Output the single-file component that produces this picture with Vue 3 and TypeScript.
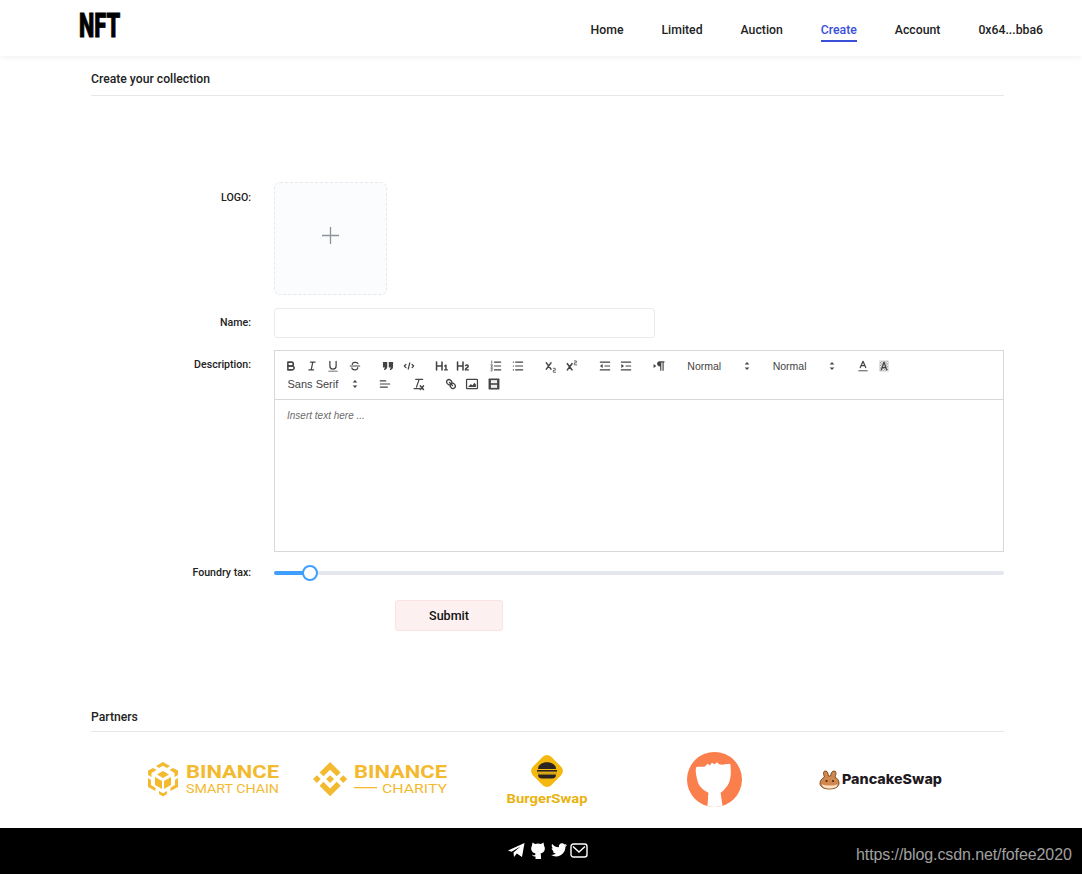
<template>
  <div class="page">
    <header class="top">
      <div class="logo">NFT</div>
      <nav class="nav">
        <a v-for="item in navItems" :key="item" class="nav-item" :class="{ active: item === 'Create' }">{{ item }}</a>
      </nav>
    </header>

    <main class="main">
      <h2 class="section-title">Create your collection</h2>

      <form class="form" @submit.prevent>
        <div class="row">
          <label class="label logo-label">LOGO:</label>
          <div class="upload">
            <svg width="19" height="19" viewBox="0 0 19 19"><path d="M9.5 1v17M1 9.5h17" stroke="#8c939d" stroke-width="1.3" /></svg>
          </div>
        </div>

        <div class="row">
          <label class="label name-label">Name:</label>
          <input class="input" type="text" />
        </div>

        <div class="row">
          <label class="label desc-label">Description:</label>
          <div class="editor">
            <div class="toolbar">
              <div class="tb-row">
                <span class="tb-group">
                  <span class="tb"><svg viewBox="0 0 18 18"><path class="st2" d="M5,4H9.5A2.5,2.5,0,0,1,12,6.5v0A2.5,2.5,0,0,1,9.5,9H5V4Z" /><path class="st2" d="M5,9h5.5A2.5,2.5,0,0,1,13,11.5v0A2.5,2.5,0,0,1,10.5,14H5V9Z" /></svg></span>
                  <span class="tb"><svg viewBox="0 0 18 18"><path class="st" d="M7 4h6M5 14h6M8 14l2-10" /></svg></span>
                  <span class="tb"><svg viewBox="0 0 18 18"><path class="st" d="M5,3V9a4,4,0,0,0,4,4h0a4,4,0,0,0,4-4V3" /><rect class="fl" x="3" y="15" width="12" height="1.2" rx=".5" /></svg></span>
                  <span class="tb"><svg viewBox="0 0 18 18"><path class="st" d="M3 9h12M5.6 7C5 4.200 12 3 12.800 6M12.500 11C13 14.500 5.500 15 5 11.500" /></svg></span>
                </span>
                <span class="tb-group">
                  <span class="tb"><svg viewBox="0 0 18 18"><path class="fl" d="M2.500 4h5.500v6c0 2.500-1.500 4-3.800 4.300l-.5-1.500c1-.3 1.500-1 1.500-1.800H2.500zM10 4h5.500v6c0 2.500-1.500 4-3.800 4.300l-.5-1.500c1-.3 1.500-1 1.500-1.800H10z" /></svg></span>
                  <span class="tb"><svg viewBox="0 0 18 18"><path class="st" d="M5 7 3 9l2 2M13 7l2 2-2 2M10 5 8 13" /></svg></span>
                </span>
                <span class="tb-group">
                  <span class="tb"><svg viewBox="0 0 18 18"><path class="fl" d="M10,4V14a1,1,0,0,1-2,0V10H3v4a1,1,0,0,1-2,0V4A1,1,0,0,1,3,4V8H8V4a1,1,0,0,1,2,0Zm6.07,9.21H14.99V7.6a.54.54,0,0,0-.6-.61h-.63a1,1,0,0,0-.75.3L11.650,8.570a.54.54,0,0,0-.02.86l.29.31a.54.54,0,0,0,.85.03l.1-.09a1.200,1.200,0,0,0,.24-.35h.02s-.01.31-.01.61V13.21H12.040a.54.54,0,0,0-.6.61v.44a.54.54,0,0,0,.6.6h4.030a.54.54,0,0,0,.6-.6v-.44A.54.54,0,0,0,16.070,13.210Z" /></svg></span>
                  <span class="tb"><svg viewBox="0 0 18 18"><path class="fl" d="M16.740,13.810v.44a.54.54,0,0,1-.6.61H11.860a.58.58,0,0,1-.65-.61V14.010c0-2.910,3.400-3.420,3.400-4.550a.78.78,0,0,0-.85-.78,1.180,1.180,0,0,0-.84.380c-.27.26-.56.370-.86.130l-.43-.34c-.31-.24-.39-.52-.15-.81a2.970,2.970,0,0,1,2.450-1.180,2.450,2.450,0,0,1,2.680,2.410c0,2.450-3.180,2.930-3.280,3.940h2.790A.54.54,0,0,1,16.74,13.81ZM9,3A1,1,0,0,0,8,4V8H3V4A1,1,0,0,0,1,4V14a1,1,0,0,0,2,0V10H8v4a1,1,0,0,0,2,0V4A1,1,0,0,0,9,3Z" /></svg></span>
                </span>
                <span class="tb-group">
                  <span class="tb"><svg viewBox="0 0 18 18"><path class="st" d="M7 4h8M7 9h8M7 14h8" /><path class="thin" d="M3.500 2.500v3M2.500 7.500h2l-2 3h2M2.500 12.500h2l-1 1.500c1 0 1 2-1 1.500" /></svg></span>
                  <span class="tb"><svg viewBox="0 0 18 18"><path class="st" d="M6 4h9M6 9h9M6 14h9M3 4h.1M3 9h.1M3 14h.1" /></svg></span>
                </span>
                <span class="tb-group">
                  <span class="tb"><svg viewBox="0 0 18 18"><path class="st2" d="M3 5l6 8M9 5l-6 8" /><path class="thin" d="M12 12h2.500v2.500H12V17h3" /></svg></span>
                  <span class="tb"><svg viewBox="0 0 18 18"><path class="st2" d="M3 6l6 8M9 6l-6 8" /><path class="thin" d="M12 2.500h2.500V5H12v2.500h3" /></svg></span>
                </span>
                <span class="tb-group">
                  <span class="tb"><svg viewBox="0 0 18 18"><path class="st" d="M3 4h12M3 14h12M9 9h6" /><path class="fl" d="M6 6.500v5L2.500 9z" /></svg></span>
                  <span class="tb"><svg viewBox="0 0 18 18"><path class="st" d="M3 4h12M3 14h12M9 9h6" /><path class="fl" d="M3 6.500v5L6.500 9z" /></svg></span>
                </span>
                <span class="tb-group">
                  <span class="tb"><svg viewBox="0 0 18 18"><path class="fl" d="M2 6.500v5L5.500 9z" /><path class="fl" d="M10 3h6v1.500h-1V15h-1.500V4.500H12V15h-1.500V9.500C8 9.500 6.500 8.200 6.500 6.200S8 3 10 3z" /></svg></span>
                </span>
                <span class="tb-group picker"><span>Normal</span><svg class="arrows" viewBox="0 0 18 18"><path class="fl" d="M6 7l3-3 3 3zM6 11l3 3 3-3z" /></svg></span>
                <span class="tb-group picker"><span>Normal</span><svg class="arrows" viewBox="0 0 18 18"><path class="fl" d="M6 7l3-3 3 3zM6 11l3 3 3-3z" /></svg></span>
                <span class="tb-group">
                  <span class="tb"><svg viewBox="0 0 18 18"><path class="st" d="M5.500 11 9 3l3.500 8M6.800 8.500h4.400" /><rect x="3" y="14.500" width="12" height="1.300" fill="#555" /></svg></span>
                  <span class="tb"><svg viewBox="0 0 18 18"><defs><pattern id="bgDots" width="2" height="2" patternUnits="userSpaceOnUse"><rect width="1" height="1" fill="#999" /><rect x="1" y="1" width="1" height="1" fill="#999" /></pattern></defs><rect x="3" y="2" width="12" height="14" fill="url(#bgDots)" /><path class="st" d="M5.500 14 9 4l3.500 10M6.800 11h4.400" /></svg></span>
                </span>
              </div>
              <div class="tb-row">
                <span class="tb-group picker font"><span>Sans Serif</span><svg class="arrows" viewBox="0 0 18 18"><path class="fl" d="M6 7l3-3 3 3zM6 11l3 3 3-3z" /></svg></span>
                <span class="tb-group">
                  <span class="tb"><svg viewBox="0 0 18 18"><path class="st" d="M3 5h7M3 9h12M3 13h9" /></svg></span>
                </span>
                <span class="tb-group">
                  <span class="tb"><svg viewBox="0 0 18 18"><path class="st" d="M6 3h9M10.500 3 7 13M4 15h7" /><path class="st2" d="M12 11.500l4 4.500M16 11.500l-4 4.500" /></svg></span>
                </span>
                <span class="tb-group">
                  <span class="tb"><svg viewBox="0 0 18 18"><path class="st" d="M7 7l4 4" /><path class="st" d="M8.900,4.577a3.476,3.476,0,0,1,.36,4.679A3.476,3.476,0,0,1,4.577,8.900C3.185,7.500,2.035,6.400,4.217,4.217S7.500,3.185,8.900,4.577Z" /><path class="st" d="M13.423,9.100a3.476,3.476,0,0,0-4.679-.36,3.476,3.476,0,0,0,.36,4.679c1.392,1.392,2.500,2.542,4.679.36S14.815,10.500,13.423,9.100Z" /></svg></span>
                  <span class="tb"><svg viewBox="0 0 18 18"><rect class="st" x="2" y="3" width="14" height="12" rx="1" /><path class="fl" d="M4 13l3.500-4 2 2 2.500-3.500 2 2V13z" /></svg></span>
                  <span class="tb"><svg viewBox="0 0 18 18"><rect class="fl" x="2" y="2" width="14" height="14" rx="1" /><rect x="5" y="4" width="8" height="4" fill="#eee" /><rect x="5" y="10" width="8" height="4" fill="#eee" /></svg></span>
                </span>
              </div>
            </div>
            <div class="editor-body">Insert text here ...</div>
          </div>
        </div>

        <div class="row slider-row">
          <label class="label">Foundry tax:</label>
          <div class="slider">
            <div class="slider-fill" :style="{ width: taxPercent + '%' }"></div>
            <div class="slider-handle" :style="{ left: taxPercent + '%' }"></div>
          </div>
        </div>

        <button class="submit" type="submit">Submit</button>
      </form>

      <h2 class="section-title partners-title">Partners</h2>

      <div class="partners">
        <svg width="134" height="36" viewBox="0 0 134 36">
          <g fill="#f3ba2f">
            <path d="M17 1l7 4-3 2-4-2.300L13 7l-3-2zM17 10l6 3.500-6 3.500-6-3.500zM9 16l7 4v8l-7-4zM25 16l-7 4v8l7-4z" />
            <path d="M7 7l3.500 2-5 3v4L2 14V9.500zM27 7l-3.500 2 5 3v4l3.500-2V9.500zM2 17l3 2v5l4.500 2.700V30L2 26zM32 17l-3 2v5l-4.500 2.700V30L32 26zM13 30l4 2.300 4-2.300v3l-4 2.500L13 33z" />
            <text class="bn-big" x="40" y="17" textLength="93" lengthAdjust="spacingAndGlyphs">BINANCE</text>
            <text class="bn-small" x="40" y="32" textLength="93" lengthAdjust="spacingAndGlyphs">SMART CHAIN</text>
          </g>
        </svg>
        <svg width="135" height="36" viewBox="0 0 135 36">
          <g fill="#f3ba2f">
            <path transform="translate(0 1) scale(.27)" d="M38.730 53.200l24.590-24.580 24.600 24.600 14.300-14.310L63.320 0 24.420 38.900zM0 63.310l14.300-14.310 14.310 14.310-14.310 14.300zM38.730 73.410l24.590 24.590 24.600-24.600 14.310 14.290L63.320 126.610 24.420 87.720zM98 63.310l14.300-14.310 14.310 14.310-14.310 14.300zM77.830 63.300L63.320 48.780 52.590 59.510l-1.240 1.230-2.540 2.540 14.510 14.500 14.510-14.470z" />
            <text class="bn-big" x="41" y="17" textLength="93" lengthAdjust="spacingAndGlyphs">BINANCE</text>
            <rect x="41" y="26" width="23" height="1.300" />
            <text class="bn-small" x="69" y="32" textLength="65" lengthAdjust="spacingAndGlyphs">CHARITY</text>
          </g>
        </svg>
        <svg class="burger-logo" width="82" height="54" viewBox="0 0 82 54">
          <rect x="28" y="5" width="26" height="26" rx="6" transform="rotate(45 41 18)" fill="#f5b80f" />
          <path d="M32 16c0-9 18-9 18 0z" fill="#2b2420" />
          <rect x="31" y="17" width="20" height="1.600" fill="#2b2420" />
          <rect x="31" y="19.500" width="20" height="1.300" fill="#c8a020" />
          <path d="M32 21.500h18c0 3-2 4-4 4H36c-2 0-4-1-4-4z" fill="#2b2420" />
          <text class="burger" x="41" y="50" text-anchor="middle" textLength="81" lengthAdjust="spacingAndGlyphs">BurgerSwap</text>
        </svg>
        <svg class="cat" width="55" height="55" viewBox="0 0 54 54">
          <defs>
            <clipPath id="catClip"><circle cx="27" cy="27" r="27" /></clipPath>
          </defs>
          <circle cx="27" cy="27" r="27" fill="#fb7e4d" />
          <path clip-path="url(#catClip)" fill="#fff" d="M9 15c3-1.500 6 .5 9-1l2-2.500 2.500 1.500 2-2.500 2.500 1.500 2.500-2 2 2 3 .5 3-.5 5-.5c.5 4 1 9 0 14-1 7-6 12-9.500 14.500L35 54H20l1-14c-6-3-10-7-11-13-1-4-2-9-1-12z" />
        </svg>
        <svg class="pancake-logo" width="124" height="24" viewBox="0 0 124 24">
          <path d="M5.500 11C4 7.500 4 5 6.500 5S9 8 9.500 10h2C12 8 12.500 5 15 5s2.500 2.500 1 6c2.500 1.500 4 3.500 4 6 0 4-4 6-9.500 6S1 21 1 17c0-2.500 2-4.500 4.500-6z" fill="#d1884f" stroke="#633001" stroke-width=".8" />
          <path d="M3 18c2 2 13 2 15.500 0 0 3-3 4.500-7.800 4.500S3 21 3 18z" fill="#fee3c4" />
          <circle cx="7.500" cy="15" r="1.100" fill="#452a15" />
          <circle cx="14" cy="15" r="1.100" fill="#452a15" />
          <text class="pancake" x="23" y="18" textLength="100" lengthAdjust="spacingAndGlyphs">PancakeSwap</text>
        </svg>
      </div>
    </main>

    <footer class="footer">
      <svg width="17" height="16" viewBox="0 0 17 16"><path fill="#fff" d="M0 8.500 16.500 1 14 15 8.800 11.500 6 15 5.500 10.500 12.500 4.500 3.500 9.800z" /></svg>
      <svg width="16" height="17" viewBox="0 0 16 17"><path fill="#fff" d="M2.500 0.500 5 2a8 8 0 0 1 6 0l2.500-1.500.6 3.500c1.500 2 1 6.500-3.600 7.500.5 1 .5 2.500.5 5.500H5.500v-2.500c-2.500.5-3-1.500-4-2 1.500 0 2 1.500 3.800.5 0-1 0-1.200.2-1.500C1 10.500.5 6 1.900 4z" /></svg>
      <svg width="16" height="14" viewBox="0 0 24 20"><path fill="#fff" d="M24 2.400c-.9.400-1.800.7-2.800.8 1-.6 1.800-1.600 2.200-2.700-1 .6-2 1-3.100 1.200C19.300.7 18 0 16.600 0c-3.200 0-5.500 3-4.800 6C7.700 5.800 4.100 3.800 1.700.9.400 3.100 1 6 3.200 7.500c-.8 0-1.600-.2-2.200-.6 0 2.300 1.600 4.500 4 5-.7.200-1.500.200-2.200.1.600 2 2.500 3.400 4.600 3.400-2 1.600-4.600 2.300-7.300 2 2.200 1.400 4.800 2.200 7.500 2.200 9.100 0 14.300-7.700 14-14.600 1-.7 1.800-1.600 2.400-2.600z" /></svg>
      <svg class="mail" width="18" height="15" viewBox="0 0 18 15"><rect x="1" y="1" width="16" height="13" rx="2.500" fill="none" stroke="#fff" stroke-width="1.400" /><path d="M3 3.500 9 9l6-5.500" fill="none" stroke="#fff" stroke-width="1.400" /></svg>
      <span class="watermark">https://blog.csdn.net/fofee2020</span>
    </footer>
  </div>
</template>

<script setup lang="ts">
const navItems: string[] = ['Home', 'Limited', 'Auction', 'Create', 'Account', '0x64...bba6']

// position of the foundry tax handle on the track
const taxPercent = 4.9
</script>

<style>
html,
body {
  margin: 0;
  background: #fff;
}
</style>

<style scoped>
.page {
  position: relative;
  width: 1082px;
  height: 874px;
  display: flex;
  flex-direction: column;
  overflow: hidden;
  font-family: Roboto, "Liberation Sans", sans-serif;
  color: #222;
}

/* header */
.top {
  height: 56px;
  flex: none;
  display: flex;
  align-items: center;
  justify-content: space-between;
  padding: 0 39px 0 79px;
  box-shadow: 0 2px 6px rgba(0, 0, 0, 0.05);
}

.logo {
  width: 42px;
  margin-top: -6px;
  font-family: Roboto, sans-serif;
  font-size: 33px;
  font-weight: 900;
  line-height: 33px;
  color: #000;
  transform: scaleX(0.66);
  transform-origin: left center;
  -webkit-text-stroke: 0.8px #000;
}

.nav {
  display: flex;
  gap: 38px;
  margin-top: 3px;
}

.nav-item {
  position: relative;
  font-size: 12.250px;
  font-weight: 500;
  line-height: 16px;
  color: #222;
}

.nav-item.active {
  color: #3a50d9;
}

.nav-item.active::after {
  content: '';
  position: absolute;
  left: 0;
  right: 0;
  bottom: -4px;
  height: 2px;
  background: #3a50d9;
}

/* main */
.main {
  width: 913px;
  margin-left: 91px;
  flex: 1;
}

.section-title {
  margin: 0;
  height: 40px;
  line-height: 46px;
  box-sizing: border-box;
  border-bottom: 1px solid #e8e8ec;
  font-size: 12.200px;
  font-weight: 500;
  color: #222;
}

.form {
  margin-top: 86px;
}

.row {
  display: flex;
  gap: 23px;
  margin-bottom: 12px;
}

.label {
  width: 160px;
  flex: none;
  text-align: right;
  font-size: 10.600px;
  font-weight: 500;
  line-height: 14px;
  color: #222;
}

.logo-label {
  padding-top: 9px;
}

.name-label {
  padding-top: 8px;
}

.desc-label {
  padding-top: 8px;
}

.upload {
  width: 113px;
  height: 113px;
  margin-bottom: 1px;
  box-sizing: border-box;
  padding-bottom: 7px;
  border: 1px dashed #e6e8ee;
  border-radius: 6px;
  background: #fbfcfe;
  display: flex;
  align-items: center;
  justify-content: center;
}

.input {
  width: 381px;
  height: 30px;
  box-sizing: border-box;
  border: 1px solid #e9ebef;
  border-radius: 3px;
  background: #fff;
  outline: none;
}

.editor {
  width: 730px;
  height: 202px;
  box-sizing: border-box;
  border: 1px solid #d6d8da;
}

.toolbar {
  height: 49px;
  box-sizing: border-box;
  padding: 6px 5px;
  border-bottom: 1px solid #d6d8da;
  font-family: "Liberation Sans", sans-serif;
  font-size: 10.500px;
  color: #444;
}

.tb-row {
  display: flex;
  height: 18px;
  gap: 11.500px;
}

.tb-group {
  display: flex;
}

.tb {
  width: 21.400px;
  height: 18px;
  display: flex;
  align-items: center;
  justify-content: center;
}

.tb svg {
  width: 14px;
  height: 14px;
}

.st,
.st2,
.thin {
  fill: none;
  stroke: #444;
  stroke-width: 1.600;
  stroke-linecap: round;
  stroke-linejoin: round;
}

.st2 {
  stroke-width: 2;
}

.thin {
  stroke-width: 1;
}

.fl {
  fill: #444;
}

.picker {
  width: 73.800px;
  padding-left: 6px;
  box-sizing: border-box;
  align-items: center;
  justify-content: space-between;
}

.picker.font {
  width: 83px;
  padding-left: 7.500px;
  font-size: 11px;
}

.arrows {
  width: 14px;
  height: 14px;
  margin-right: 1px;
}

.editor-body {
  padding: 9px 12px;
  font-family: "Liberation Sans", sans-serif;
  font-size: 10px;
  font-style: italic;
  line-height: 14px;
  color: #6b6b6b;
}

.slider-row {
  align-items: center;
  height: 18px;
  margin: 0 0 18px;
}

.slider {
  position: relative;
  width: 730px;
  height: 4px;
  border-radius: 2px;
  background: #e4e7ed;
}

.slider-fill {
  height: 100%;
  border-radius: 2px;
  background: #409eff;
}

.slider-handle {
  position: absolute;
  top: 50%;
  width: 16px;
  height: 16px;
  box-sizing: border-box;
  border: 2px solid #409eff;
  border-radius: 50%;
  background: #fff;
  transform: translate(-50%, -50%);
}

.submit {
  display: block;
  width: 108px;
  height: 31px;
  margin-left: 304px;
  border: 1px solid #fae3e3;
  border-radius: 3px;
  background: #fdf0f0;
  font-family: inherit;
  font-size: 12.500px;
  font-weight: 500;
  color: #111;
}

.partners-title {
  height: 38px;
  margin-top: 63px;
}

.partners {
  display: grid;
  grid-template-columns: repeat(5, 167px);
  justify-content: center;
  justify-items: center;
  align-items: center;
  height: 56px;
  margin-top: 19px;
  margin-left: -1px;
}

.burger-logo {
  margin-top: 2px;
}

.pancake-logo {
  margin-top: -2px;
}

.bn-big {
  font-family: Roboto, sans-serif;
  font-size: 18px;
  font-weight: 700;
}

.bn-small {
  font-family: Roboto, sans-serif;
  font-size: 12px;
  font-weight: 400;
}

.burger {
  font-family: Roboto, sans-serif;
  font-size: 13px;
  font-weight: 700;
  fill: #e9b30f;
}

.pancake {
  font-family: Inter, sans-serif;
  font-size: 13.500px;
  font-weight: 800;
  fill: #1f1a1e;
}

/* footer */
.footer {
  position: relative;
  height: 46px;
  flex: none;
  background: #000;
  display: flex;
  align-items: center;
  gap: 5px;
  padding-left: 508px;
  padding-bottom: 2px;
  box-sizing: border-box;
}

.mail {
  margin-left: -2px;
}

.watermark {
  position: absolute;
  left: 856px;
  top: 16px;
  font-family: "Liberation Sans", sans-serif;
  font-size: 16px;
  letter-spacing: -0.1px;
  line-height: 22px;
  color: #a0a0a0;
}
</style>
